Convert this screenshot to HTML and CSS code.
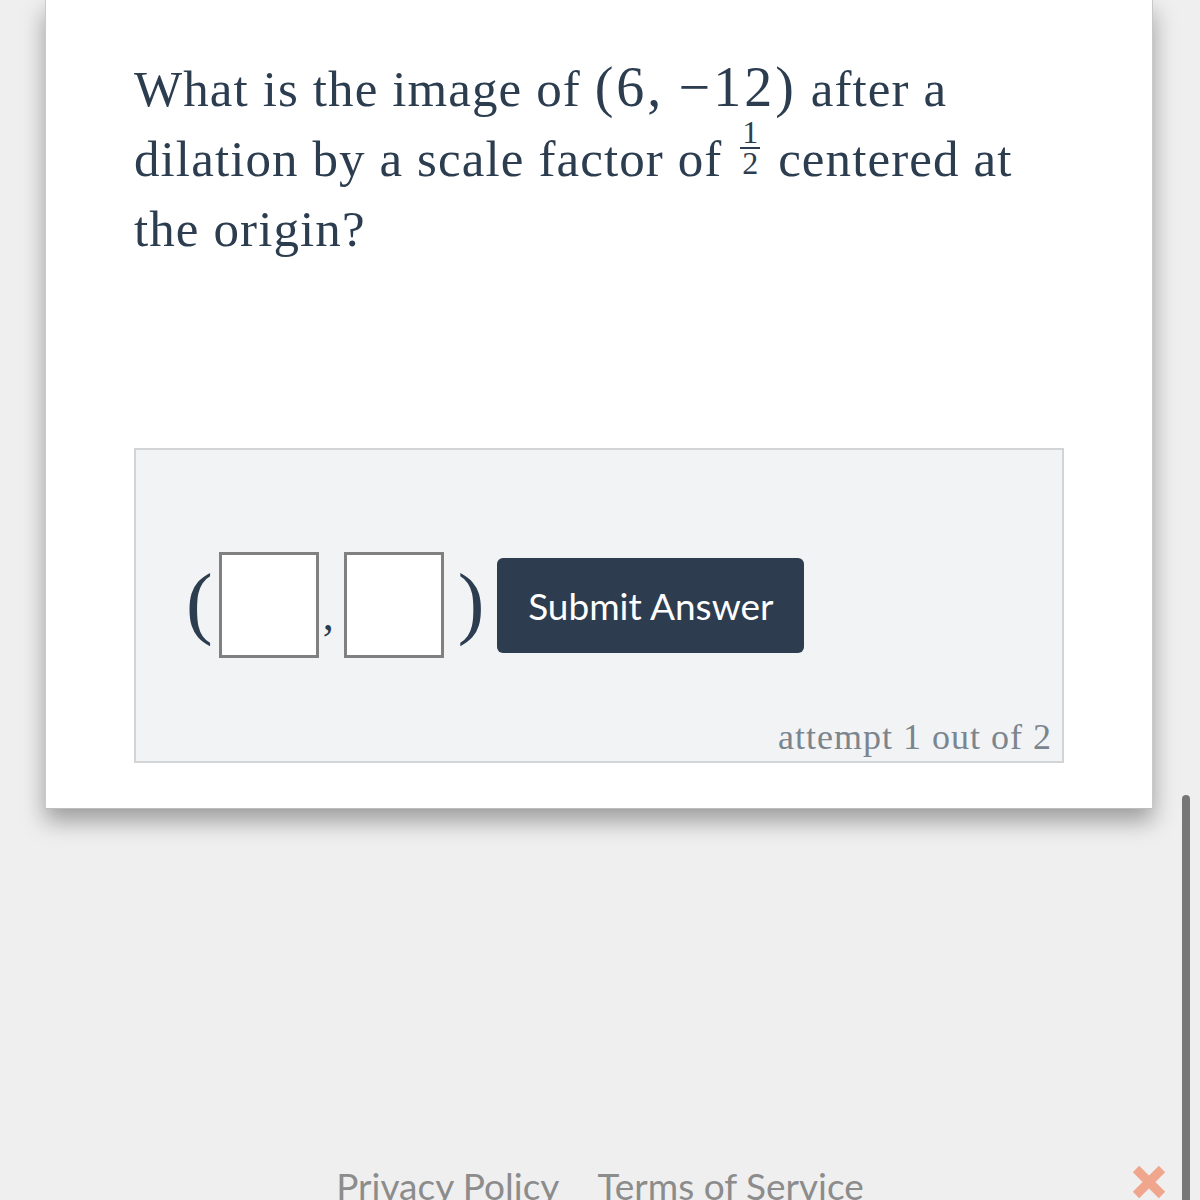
FILE: index.html
```html
<!DOCTYPE html>
<html>
<head>
<meta charset="utf-8">
<link rel="stylesheet" href="styles.css">
</head>
<body>
<div class="page">
  <div class="card">
    <p class="question">What is the image of <span class="math">(6,&thinsp;&minus;12)</span> after a<br>dilation by a scale factor of <span class="frac"><span class="num">1</span><span class="den">2</span></span> centered at<br>the origin?</p>
    <div class="answer">
      <div class="row">
        <span class="paren open">(</span>
        <span class="box"></span>
        <span class="comma">,</span>
        <span class="box"></span>
        <span class="paren close-paren">)</span>
        <button class="submit">Submit Answer</button>
      </div>
      <div class="attempt">attempt 1 out of 2</div>
    </div>
  </div>
  <div class="footer">
    <span>Privacy Policy</span>
    <span>Terms of Service</span>
  </div>
</div>
<div class="scrollbar"></div>
<svg class="close" width="36" height="40" viewBox="0 0 36 40">
  <path d="M5 5 L31 31 M31 5 L5 31" stroke="#f0a68c" stroke-width="9" stroke-linecap="butt" fill="none"/>
</svg>
</body>
</html>
```

FILE: styles.css
```css
html, body {
  margin: 0;
  padding: 0;
}
body {
  background: #efefef;
  width: 1200px;
  height: 1200px;
  overflow: hidden;
  position: relative;
}
.page {
  display: flex;
  flex-direction: column;
}
.card {
  margin-left: 45px;
  width: 1108px;
  box-sizing: border-box;
  background: #fff;
  border-left: 1px solid #c9c9c9;
  border-right: 1px solid #c9c9c9;
  border-bottom: 1px solid #bdbdbd;
  padding: 52px 88px 45px 88px;
  box-shadow: 0 12px 22px rgba(0,0,0,0.35);
}
.question {
  margin: 0;
  font-family: "Liberation Serif", serif;
  font-size: 51px;
  letter-spacing: 1.1px;
  line-height: 70px;
  color: #2c3d50;
}
.math {
  font-family: "Liberation Serif", serif;
  font-size: 56px;
  letter-spacing: 3px;
}
.frac {
  display: inline-flex;
  flex-direction: column;
  align-items: center;
  vertical-align: 33px;
  font-size: 32px;
  margin: -8px 4px;
  letter-spacing: 0;
}
.frac .num {
  line-height: 24px;
  padding: 0 2px 3px;
  border-bottom: 2px solid #2c3d50;
}
.frac .den {
  line-height: 24px;
  padding-top: 2px;
}
.answer {
  margin-top: 184px;
  height: 315px;
  box-sizing: border-box;
  border: 2px solid #d2d4d6;
  background: #f2f3f5;
  display: flex;
  flex-direction: column;
  padding: 0 10px 4px 50px;
}
.row {
  display: flex;
  align-items: center;
  margin-top: 102px;
}
.paren {
  font-family: "Liberation Serif", serif;
  font-size: 80px;
  color: #2c3d50;
  line-height: 80px;
  margin-top: -6px;
}
.open {
  margin-right: 6px;
}
.box {
  width: 100px;
  height: 106px;
  box-sizing: border-box;
  border: 3px solid #808080;
  background: #fff;
}
.comma {
  font-family: "Liberation Serif", serif;
  font-size: 44px;
  color: #2c3d50;
  margin: 20px 10px 0 4px;
}
.close-paren {
  margin-left: 14px;
}
.submit {
  margin-left: 13px;
  width: 307px;
  height: 95px;
  border: none;
  border-radius: 6px;
  background: #2d3c4f;
  color: #fff;
  font-family: Lato, sans-serif;
  font-size: 37px;
  padding: 0;
}
.attempt {
  margin-top: auto;
  text-align: right;
  font-family: "Liberation Serif", serif;
  font-size: 36px;
  letter-spacing: 1px;
  color: #7b858e;
  line-height: 40px;
}
.footer {
  margin-top: 354px;
  display: flex;
  justify-content: center;
  gap: 38px;
  font-family: Lato, sans-serif;
  font-size: 37px;
  color: #8c8c8c;
}
.scrollbar {
  position: absolute;
  left: 1182px;
  top: 795px;
  width: 8px;
  height: 420px;
  border-radius: 4px;
  background: #777;
}
.close {
  position: absolute;
  left: 1131px;
  top: 1164px;
}
```
